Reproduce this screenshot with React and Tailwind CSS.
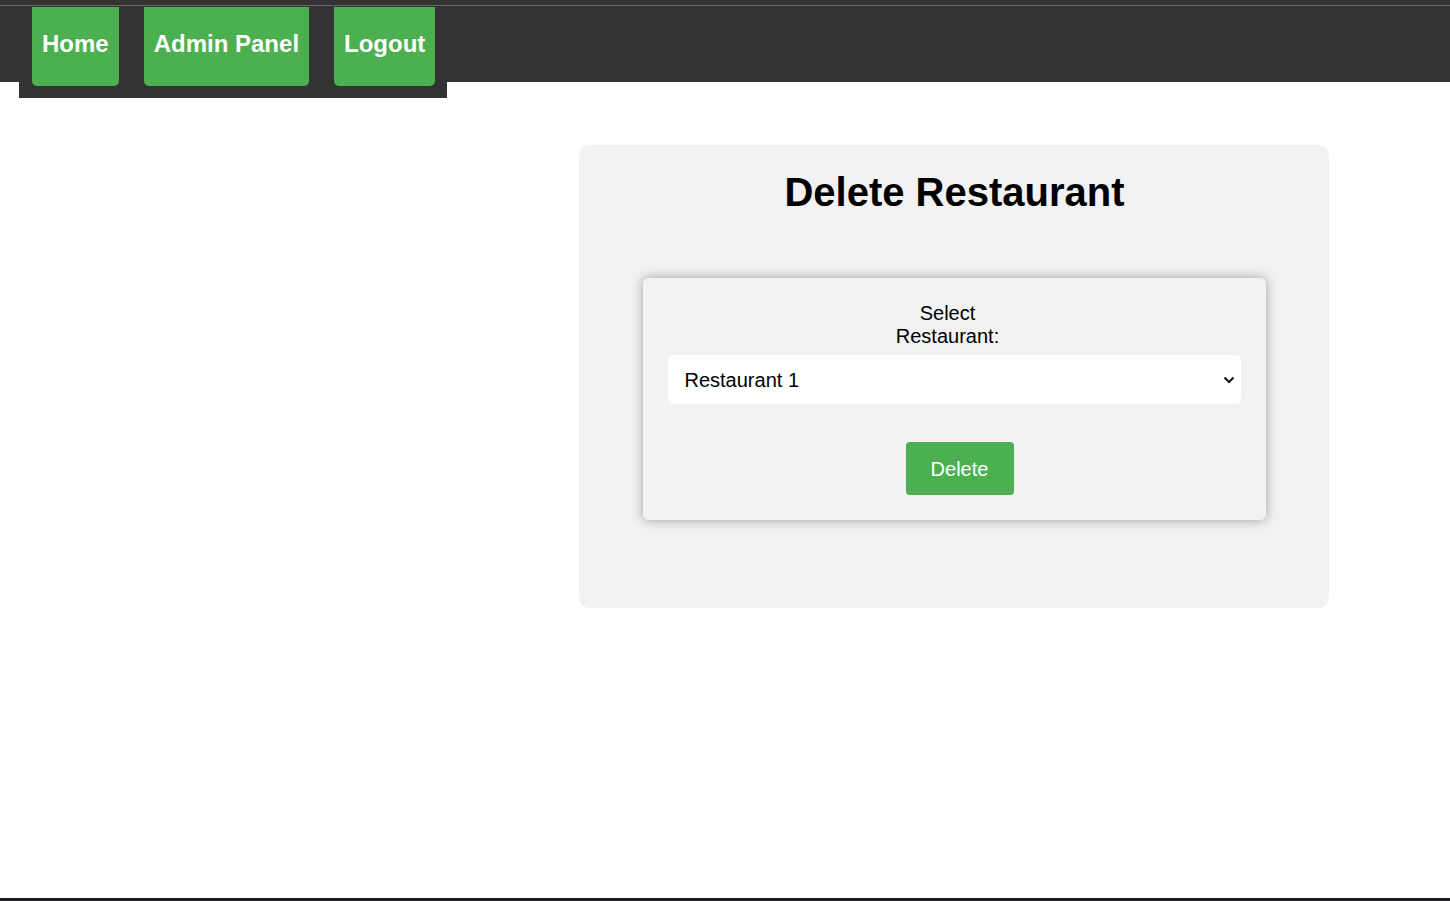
import { useState } from "react"

const links = ["Home", "Admin Panel", "Logout"]

export default function App() {
  const [restaurant, setRestaurant] = useState("1")

  return (
    <div className="min-h-[901px] flex flex-col bg-white font-['Liberation_Sans',Arial,sans-serif] text-black">
      {/* top bar */}
      <div className="h-[5px] bg-[#333]" />
      <div className="h-px bg-[#666]" />
      <header className="h-[76px] bg-[#333] flex items-start">
        <nav className="ml-[19px] w-[428px] h-[92px] bg-[#333] flex gap-[25px] pl-[13px] pt-px relative z-10">
          {links.map(l => (
            <a
              key={l}
              href="#"
              className="h-[79px] px-[10px] flex items-center pb-[5px] bg-[#4CAF50] text-white text-[24px] font-bold rounded-b-[5px]"
            >
              {l}
            </a>
          ))}
        </nav>
      </header>

      <main className="mt-[63px] ml-[579px] w-[750px] h-[463px] bg-[#f2f2f2] rounded-[10px] pt-[24px] flex flex-col items-center">
        <h1 className="text-[40px] font-bold leading-[46px] ml-px">Delete Restaurant</h1>

        <form
          onSubmit={e => e.preventDefault()}
          className="mt-[63px] w-[623px] h-[242px] rounded-[5px] bg-[#f2f2f2] shadow-[0_0_12px_rgba(0,0,0,0.35)] flex flex-col items-center pt-[24px] px-[25px]"
        >
          <label className="text-[20px] leading-[23px] text-center mr-[13px]">
            Select<br />Restaurant:
          </label>
          <div className="relative w-full mt-[7px]">
            <select
              value={restaurant}
              onChange={e => setRestaurant(e.target.value)}
              className="appearance-none w-full h-[49px] bg-white rounded-[5px] pl-[17px] text-[20px] outline-none"
            >
              <option value="1">Restaurant 1</option>
              <option value="2">Restaurant 2</option>
              <option value="3">Restaurant 3</option>
            </select>
            <svg className="absolute right-[6px] top-[21px] pointer-events-none" width="12" height="8" viewBox="0 0 12 8">
              <path d="M1.5 1.5 L6 6 L10.5 1.5" fill="none" stroke="#111" strokeWidth="2" />
            </svg>
          </div>
          <button className="mt-[38px] ml-[11px] w-[108px] h-[53px] bg-[#4CAF50] text-white text-[20px] rounded-[4px]">
            Delete
          </button>
        </form>
      </main>

      <footer className="mt-auto h-[3px] bg-[#1e1c2a]" />
    </div>
  )
}
